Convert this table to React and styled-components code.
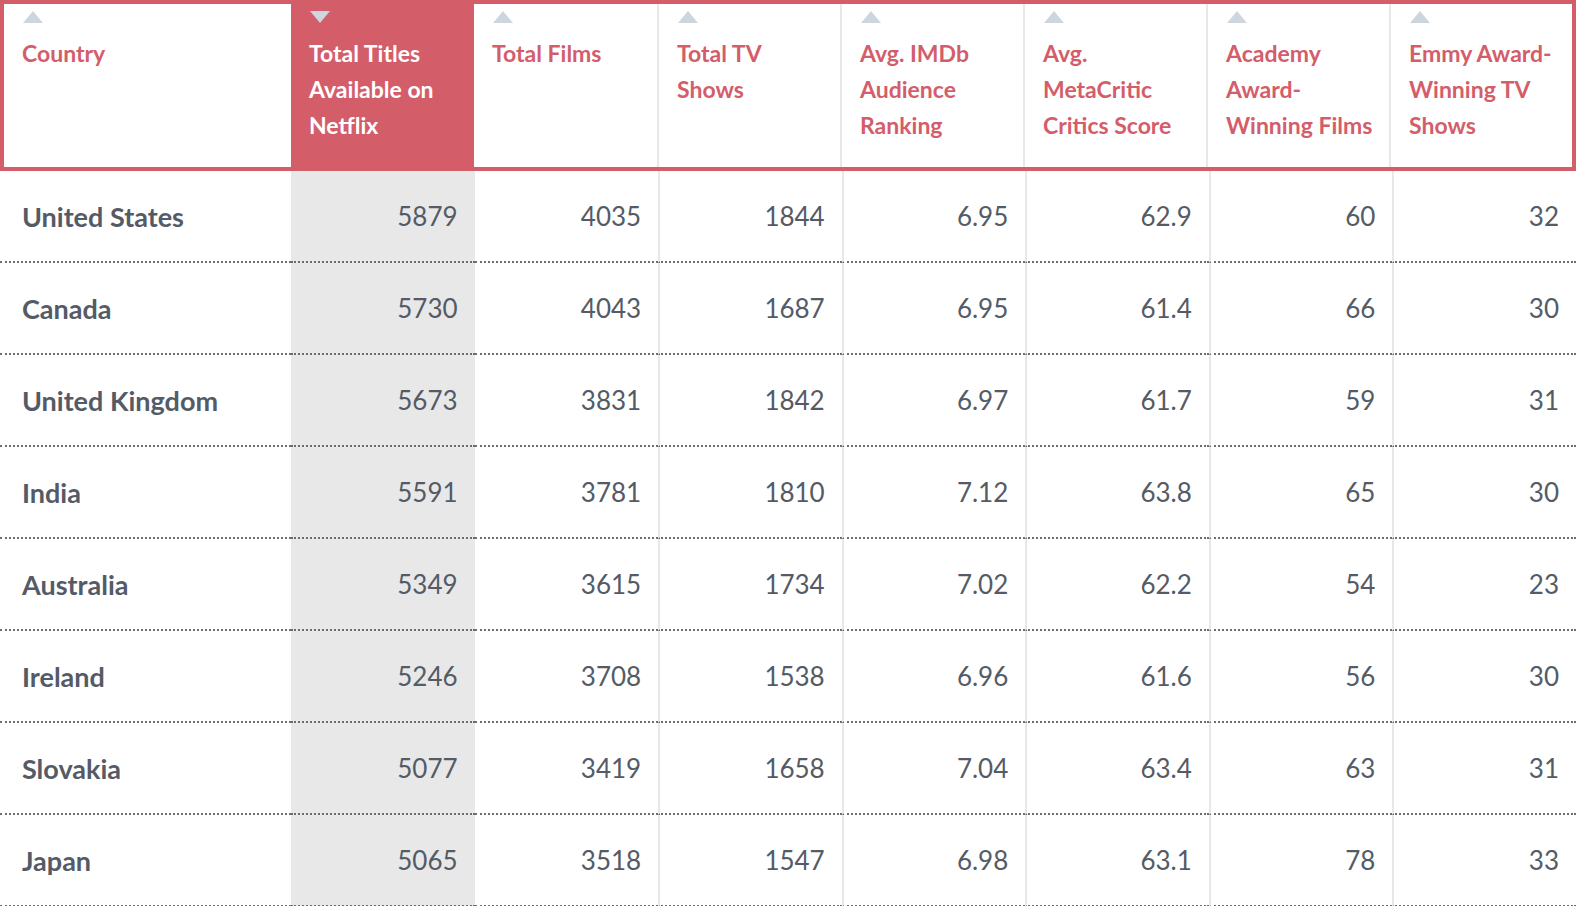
import React from 'react';
import styled, { createGlobalStyle } from 'styled-components';

const GlobalStyle = createGlobalStyle`
	body {
		margin: 0;
		background: #fff;
		font-family: Lato, "Open Sans", sans-serif;
	}
`;

const RED = '#d45d6a';
const INK = '#545b66';
const COLS = '291px repeat(7, 1fr)';

const Table = styled.div`
	width: 1576px;
`;
const HeaderRow = styled.div`
	display: grid;
	grid-template-columns: 287px repeat(7, 1fr);
	height: 171px;
	box-sizing: border-box;
	border: 4px solid ${RED};
`;
const HeadCell = styled.div`
	display: flex;
	flex-direction: column;
	padding: 7px 16px 0 18px;
	background: ${(p) => (p.$active ? RED : '#fff')};
	color: ${(p) => (p.$active ? '#fff' : RED)};
	border-left: ${(p) => (p.$divider ? '2px solid #e8e8e8' : 'none')};
	font-size: 23px;
	font-weight: 700;
	line-height: 36px;
	white-space: nowrap;
`;
const Arrow = styled.svg`
	width: 20px;
	height: 12px;
	margin: 0 0 12px 1px;
	flex: none;
`;
const BodyRow = styled.div`
	display: grid;
	grid-template-columns: ${COLS};
	height: 92px;
`;
const Cell = styled.div`
	display: flex;
	align-items: center;
	justify-content: ${(p) => (p.$name ? 'flex-start' : 'flex-end')};
	padding: 0 17px 0 22px;
	box-sizing: border-box;
	background: ${(p) => (p.$shade ? '#e8e8e8' : '#fff')};
	border-bottom: 2px dotted #6d6d6d;
	border-left: ${(p) => (p.$divider ? '2px solid #e8e8e8' : 'none')};
	color: ${INK};
	font-size: ${(p) => (p.$name ? '27px' : '26px')};
	font-weight: ${(p) => (p.$name ? 700 : 400)};
`;

const headers = [
	['Country'],
	['Total Titles', 'Available on', 'Netflix'],
	['Total Films'],
	['Total TV', 'Shows'],
	['Avg. IMDb', 'Audience', 'Ranking'],
	['Avg.', 'MetaCritic', 'Critics Score'],
	['Academy', 'Award-', 'Winning Films'],
	['Emmy Award-', 'Winning TV', 'Shows'],
];

const rows = [
	['United States', 5879, 4035, 1844, '6.95', '62.9', 60, 32],
	['Canada', 5730, 4043, 1687, '6.95', '61.4', 66, 30],
	['United Kingdom', 5673, 3831, 1842, '6.97', '61.7', 59, 31],
	['India', 5591, 3781, 1810, '7.12', '63.8', 65, 30],
	['Australia', 5349, 3615, 1734, '7.02', '62.2', 54, 23],
	['Ireland', 5246, 3708, 1538, '6.96', '61.6', 56, 30],
	['Slovakia', 5077, 3419, 1658, '7.04', '63.4', 63, 31],
	['Japan', 5065, 3518, 1547, '6.98', '63.1', 78, 33],
];

const SortArrow = ({ down }) => (
	<Arrow viewBox="0 0 20 12">
		<polygon points={down ? '0,0 20,0 10,12' : '10,0 20,12 0,12'} fill="#cdd5df" />
	</Arrow>
);

const App = () => {
	return (
		<>
			<GlobalStyle />
			<Table>
				<HeaderRow>
					{headers.map((lines, i) => (
						<HeadCell key={i} $active={i === 1} $divider={i > 2}>
							<SortArrow down={i === 1} />
							{lines.map((line) => (
								<span key={line}>{line}</span>
							))}
						</HeadCell>
					))}
				</HeaderRow>
				{rows.map((row) => (
					<BodyRow key={row[0]}>
						{row.map((value, i) => (
							<Cell key={i} $name={i === 0} $shade={i === 1} $divider={i > 2}>
								{value}
							</Cell>
						))}
					</BodyRow>
				))}
			</Table>
		</>
	);
};

export default App;
